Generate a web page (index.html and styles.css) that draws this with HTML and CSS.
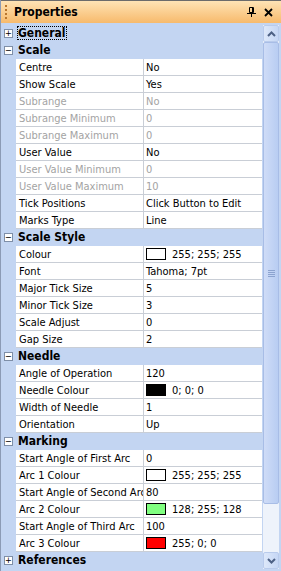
FILE: index.html
```html
<!DOCTYPE html>
<html lang="en">
<head>
    <meta charset="UTF-8">
    <title>Properties</title>
    <link rel="stylesheet" href="styles.css">
</head>
<body>
    <div class="panel">
        <div class="title-bar">
            <span class="grip"></span>
            <span class="title">Properties</span>
            <svg class="pin" width="9" height="10" viewBox="0 0 9 10">
                <path d="M2.5 0.5 H6.5 V5.5 H2.5 Z" fill="none" stroke="#000"/>
                <path d="M5.5 1 V5" stroke="#000"/>
                <path d="M0 6.5 H9 M4.5 6.5 V10" stroke="#000"/>
            </svg>
            <svg class="close" width="9" height="9" viewBox="0 0 9 9">
                <path d="M1 1 L8 8 M8 1 L1 8" stroke="#000" stroke-width="1.8"/>
            </svg>
        </div>
        <div class="body">
            <div class="grid">
                <div class="cat"><span class="box">+</span><span class="cat-name focus">General</span></div>
                <div class="cat"><span class="box">&minus;</span><span class="cat-name">Scale</span></div>
                <div class="row"><div class="name">Centre</div><div class="value">No</div></div>
                <div class="row"><div class="name">Show Scale</div><div class="value">Yes</div></div>
                <div class="row off"><div class="name">Subrange</div><div class="value">No</div></div>
                <div class="row off"><div class="name">Subrange Minimum</div><div class="value">0</div></div>
                <div class="row off"><div class="name">Subrange Maximum</div><div class="value">0</div></div>
                <div class="row"><div class="name">User Value</div><div class="value">No</div></div>
                <div class="row off"><div class="name">User Value Minimum</div><div class="value">0</div></div>
                <div class="row off"><div class="name">User Value Maximum</div><div class="value">10</div></div>
                <div class="row"><div class="name">Tick Positions</div><div class="value">Click Button to Edit</div></div>
                <div class="row"><div class="name">Marks Type</div><div class="value">Line</div></div>
                <div class="cat"><span class="box">&minus;</span><span class="cat-name">Scale Style</span></div>
                <div class="row"><div class="name">Colour</div><div class="value"><span class="swatch white"></span>255; 255; 255</div></div>
                <div class="row"><div class="name">Font</div><div class="value">Tahoma; 7pt</div></div>
                <div class="row"><div class="name">Major Tick Size</div><div class="value">5</div></div>
                <div class="row"><div class="name">Minor Tick Size</div><div class="value">3</div></div>
                <div class="row"><div class="name">Scale Adjust</div><div class="value">0</div></div>
                <div class="row"><div class="name">Gap Size</div><div class="value">2</div></div>
                <div class="cat"><span class="box">&minus;</span><span class="cat-name">Needle</span></div>
                <div class="row"><div class="name">Angle of Operation</div><div class="value">120</div></div>
                <div class="row"><div class="name">Needle Colour</div><div class="value"><span class="swatch black"></span>0; 0; 0</div></div>
                <div class="row"><div class="name">Width of Needle</div><div class="value">1</div></div>
                <div class="row"><div class="name">Orientation</div><div class="value">Up</div></div>
                <div class="cat"><span class="box">&minus;</span><span class="cat-name">Marking</span></div>
                <div class="row"><div class="name">Start Angle of First Arc</div><div class="value">0</div></div>
                <div class="row"><div class="name">Arc 1 Colour</div><div class="value"><span class="swatch white"></span>255; 255; 255</div></div>
                <div class="row"><div class="name">Start Angle of Second Arc</div><div class="value">80</div></div>
                <div class="row"><div class="name">Arc 2 Colour</div><div class="value"><span class="swatch green"></span>128; 255; 128</div></div>
                <div class="row"><div class="name">Start Angle of Third Arc</div><div class="value">100</div></div>
                <div class="row"><div class="name">Arc 3 Colour</div><div class="value"><span class="swatch red"></span>255; 0; 0</div></div>
                <div class="cat"><span class="box">+</span><span class="cat-name">References</span></div>
            </div>
            <div class="scrollbar">
                <div class="arrow">
                    <svg width="9" height="6" viewBox="0 0 9 6"><path d="M1 5 L4.5 1.5 L8 5" fill="none" stroke="#4d6185" stroke-width="2"/></svg>
                </div>
                <div class="thumb"><span class="thumb-grip"></span></div>
                <div class="track"></div>
                <div class="arrow">
                    <svg width="9" height="6" viewBox="0 0 9 6"><path d="M1 1 L4.5 4.5 L8 1" fill="none" stroke="#4d6185" stroke-width="2"/></svg>
                </div>
            </div>
        </div>
    </div>
</body>
</html>
```

FILE: styles.css
```css
body {
    margin: 0;
    font-family: Tahoma, "DejaVu Sans Condensed", "DejaVu Sans", sans-serif;
    font-size: 11px;
}

.panel {
    width: 281px;
    height: 571px;
    box-sizing: border-box;
    border-left: 1px solid #8c9bb5;
    background-color: #c3d5f2;
    overflow: hidden;
}

.title-bar {
    height: 23px;
    box-sizing: border-box;
    display: flex;
    align-items: center;
    border-top: 1px solid #6b6b6b;
    background: linear-gradient(#fee3b5, #f7ba6c);
    padding: 0 4px 0 4px;
}

.grip {
    width: 2px;
    height: 14px;
    margin-right: 7px;
    background: repeating-linear-gradient(#b8762e 0 2px, transparent 2px 4px);
}

.title {
    flex-grow: 1;
    font-weight: bold;
    font-size: 12px;
}

.pin {
    margin-right: 8px;
}

.close {
    margin-right: 4px;
}

.body {
    display: flex;
    padding-top: 2px;
}

.grid {
    width: 261px;
}

.cat, .row {
    height: 17px;
    box-sizing: border-box;
    display: flex;
    align-items: center;
}

.cat {
    border-bottom: 1px solid #c3d5f2;
    font-weight: bold;
    font-size: 12px;
}

.box {
    width: 9px;
    height: 9px;
    box-sizing: border-box;
    margin: 0 4px 0 3px;
    border: 1px solid #7f8fa8;
    background-color: #fff;
    font-size: 9px;
    line-height: 7px;
    text-align: center;
    font-weight: normal;
}

.cat-name {
    padding: 0 1px;
    line-height: 14px;
}

.focus {
    outline: 1px dotted #000;
    outline-offset: -1px;
}

.row {
    margin-left: 15px;
    background-color: #fff;
    border-bottom: 1px solid #c9ced6;
}

.name {
    width: 124px;
    height: 100%;
    padding-left: 3px;
    border-right: 1px solid #c9ced6;
    white-space: nowrap;
    overflow: hidden;
    display: flex;
    align-items: center;
}

.value {
    flex-grow: 1;
    padding-left: 2px;
    white-space: nowrap;
    overflow: hidden;
    display: flex;
    align-items: center;
}

.off {
    color: #a3a3a3;
}

.swatch {
    width: 20px;
    height: 12px;
    box-sizing: border-box;
    border: 1px solid #000;
    margin-right: 6px;
}

.white { background-color: #fff; }
.black { background-color: #000; }
.green { background-color: #80ff80; }
.red { background-color: #ff0000; }

.scrollbar {
    width: 16px;
    height: 544px;
    margin-left: 1px;
    display: flex;
    flex-direction: column;
    background-color: #eef3fb;
}

.arrow {
    height: 17px;
    display: flex;
    align-items: center;
    justify-content: center;
    box-sizing: border-box;
    border: 1px solid #b9cbec;
    border-radius: 2px;
    background: linear-gradient(90deg, #dde8fa, #c6d7f5);
}

.thumb {
    height: 462px;
    box-sizing: border-box;
    border: 1px solid #a8bde6;
    border-radius: 2px;
    background: linear-gradient(90deg, #cfdcf7, #b8cdf2);
    display: flex;
    align-items: center;
    justify-content: center;
}

.thumb-grip {
    width: 7px;
    height: 7px;
    background: repeating-linear-gradient(#8ca3cf 0 1px, transparent 1px 2px);
}

.track {
    flex-grow: 1;
}
```
